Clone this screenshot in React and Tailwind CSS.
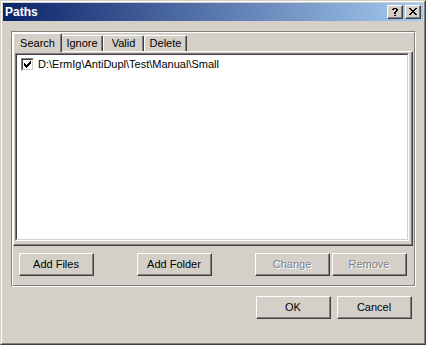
import React from "react";

function Btn({ children, disabled, className = "" }) {
  return (
    <div
      className={
        "w-[75px] h-[23px] border border-t-white border-l-white border-r-[#404040] border-b-[#404040] " +
        className
      }
    >
      <div
        className={
          "w-full h-full border-r border-b border-r-[#808080] border-b-[#808080] flex items-center justify-center leading-none " +
          (disabled ? "text-[#808080] [text-shadow:1px_1px_0_#ffffff]" : "text-black")
        }
      >
        {children}
      </div>
    </div>
  );
}

function CloseGlyph() {
  const r = [
    [0, 0, 2], [6, 0, 2],
    [1, 1, 2], [5, 1, 2],
    [2, 2, 4],
    [3, 3, 2],
    [2, 4, 4],
    [1, 5, 2], [5, 5, 2],
    [0, 6, 2], [6, 6, 2],
  ];
  return (
    <svg width="8" height="7" viewBox="0 0 8 7" shapeRendering="crispEdges">
      {r.map(([x, y, w], i) => (
        <rect key={i} x={x} y={y} width={w} height="1" fill="#000" />
      ))}
    </svg>
  );
}

function HelpGlyph() {
  const r = [
    [1, 0, 4],
    [0, 1, 2], [4, 1, 2],
    [4, 2, 2],
    [3, 3, 2],
    [2, 4, 2],
    [2, 5, 2],
    [2, 7, 2],
  ];
  return (
    <svg width="6" height="8" viewBox="0 0 6 8" shapeRendering="crispEdges">
      {r.map(([x, y, w], i) => (
        <rect key={i} x={x} y={y} width={w} height="1" fill="#000" />
      ))}
    </svg>
  );
}

function CheckGlyph() {
  const r = [
    [6, 0, 1],
    [5, 1, 2],
    [0, 2, 1], [4, 2, 3],
    [0, 3, 2], [3, 3, 3],
    [0, 4, 5],
    [1, 5, 3],
    [2, 6, 1],
  ];
  return (
    <svg width="7" height="7" viewBox="0 0 7 7" shapeRendering="crispEdges">
      {r.map(([x, y, w], i) => (
        <rect key={i} x={x} y={y} width={w} height="1" fill="#000" />
      ))}
    </svg>
  );
}

function CaptionBtn({ children }) {
  return (
    <div className="w-[16px] h-[14px] bg-[#d4d0c8] border border-t-white border-l-white border-r-[#404040] border-b-[#404040]">
      <div className="w-full h-full border-r border-b border-r-[#808080] border-b-[#808080] flex items-center justify-center">
        {children}
      </div>
    </div>
  );
}

export default function App() {
  return (
    <div className="w-[426px] h-[345px] bg-[#d4d0c8] border border-t-[#d4d0c8] border-l-[#d4d0c8] border-r-[#404040] border-b-[#404040] font-['Liberation_Sans',Arial,sans-serif] text-[11px] text-black">
      <div className="w-full h-full border border-t-white border-l-white border-r-[#808080] border-b-[#808080] p-px flex flex-col">
        {/* Title bar */}
        <div className="h-[18px] shrink-0 bg-[linear-gradient(to_right,#0a246a,#a6caf0)] flex items-center justify-between pl-[2px] pr-[2px]">
          <span className="text-white font-bold text-[12px] leading-none">Paths</span>
          <div className="flex gap-[2px]">
            <CaptionBtn>
              <HelpGlyph />
            </CaptionBtn>
            <CaptionBtn>
              <CloseGlyph />
            </CaptionBtn>
          </div>
        </div>

        {/* Etched frame */}
        <div className="ml-[8px] mt-[10px] w-[405px] h-[256px] shrink-0 border border-t-[#808080] border-l-[#808080] border-r-white border-b-white">
          <div className="w-full h-full border border-t-white border-l-white border-r-[#808080] border-b-[#808080] flex flex-col">
            {/* Tab strip */}
            <div className="h-[18px] shrink-0 flex items-end">
              <div className="w-[49px] h-[19px] -mb-px relative z-10 bg-[#d4d0c8] border-t border-l border-r border-t-white border-l-white border-r-[#404040] rounded-t-[2px] shadow-[inset_-1px_0_0_#808080] flex items-center justify-center leading-none">
                Search
              </div>
              <div className="w-[41px] h-[16px] border-t border-r border-t-white border-r-[#404040] rounded-tr-[2px] shadow-[inset_-1px_0_0_#808080] flex items-center justify-center leading-none">
                Ignore
              </div>
              <div className="w-[41px] h-[16px] border-t border-l border-r border-t-white border-l-white border-r-[#404040] rounded-t-[2px] shadow-[inset_-1px_0_0_#808080] flex items-center justify-center leading-none">
                Valid
              </div>
              <div className="w-[43px] h-[16px] border-t border-l border-r border-t-white border-l-white border-r-[#404040] rounded-t-[2px] shadow-[inset_-1px_0_0_#808080] flex items-center justify-center leading-none">
                Delete
              </div>
            </div>

            {/* Tab page */}
            <div className="w-[400px] h-[195px] shrink-0 border border-t-white border-l-white border-r-[#404040] border-b-[#404040]">
              <div className="w-full h-full border-r border-b border-r-[#808080] border-b-[#808080] pl-px pt-px pr-[2px] pb-[3px]">
                {/* List box */}
                <div className="w-full h-full border border-t-[#808080] border-l-[#808080] border-r-white border-b-white">
                  <div className="w-full h-full bg-white border border-t-[#404040] border-l-[#404040] border-r-[#d4d0c8] border-b-[#d4d0c8] pt-[3px] pl-[4px]">
                    <div className="flex items-center h-[13px]">
                      <div className="w-[13px] h-[13px] border border-t-[#808080] border-l-[#808080] border-r-white border-b-white">
                        <div className="w-full h-full bg-white border border-t-[#404040] border-l-[#404040] border-r-[#d4d0c8] border-b-[#d4d0c8] flex items-center justify-center">
                          <CheckGlyph />
                        </div>
                      </div>
                      <span className="ml-[4px] leading-none">D:\ErmIg\AntiDupl\Test\Manual\Small</span>
                    </div>
                  </div>
                </div>
              </div>
            </div>

            {/* Buttons row */}
            <div className="mt-[7px] flex">
              <Btn className="ml-[6px]">Add Files</Btn>
              <Btn className="ml-[43px]">Add Folder</Btn>
              <Btn className="ml-[43px]" disabled>Change</Btn>
              <Btn className="ml-[2px]" disabled>Remove</Btn>
            </div>
          </div>
        </div>

        {/* Dialog buttons */}
        <div className="mt-[9px] flex justify-end pr-[11px] gap-[6px]">
          <Btn>OK</Btn>
          <Btn>Cancel</Btn>
        </div>
      </div>
    </div>
  );
}
